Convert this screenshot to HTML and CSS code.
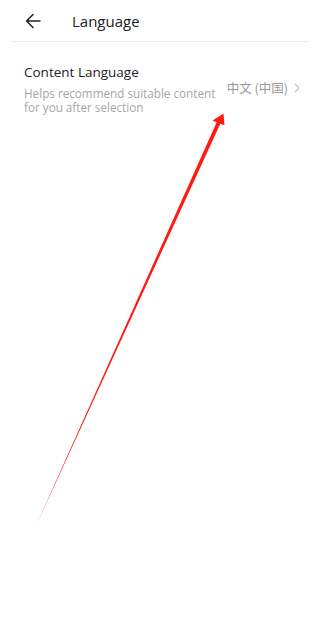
FILE: index.html
```html
<!DOCTYPE html>
<html>
<head>
<meta charset="utf-8">
<link rel="stylesheet" href="styles.css">
</head>
<body>
<div class="page">
  <header class="topbar">
    <svg class="back" width="16" height="16" viewBox="0 0 16 16">
      <path d="M15 8H2M8 1.5L1.6 8 8 14.5" fill="none" stroke="#222" stroke-width="1.6" stroke-linecap="round" stroke-linejoin="round"/>
    </svg>
    <h1 class="title">Language</h1>
  </header>
  <div class="row">
    <div class="row-text">
      <div class="row-title">Content Language</div>
      <div class="row-sub">Helps recommend suitable content for you after selection</div>
    </div>
    <div class="row-value">中文 (中国)</div>
    <svg class="chev" width="6" height="10" viewBox="0 0 6 10">
      <path d="M1 1l4 4-4 4" fill="none" stroke="#c4c4c4" stroke-width="1.1" stroke-linecap="round" stroke-linejoin="round"/>
    </svg>
  </div>
  <svg class="annot" width="309" height="637" viewBox="0 0 309 637">
    <polygon points="35,528 216.7,122.2 212.5,120.5 223.5,113.5 224.5,125.2 220.3,123.8" fill="#ff1a12"/>
  </svg>
</div>
</body>
</html>
```
FILE: styles.css
```css
html, body {
  margin: 0;
  padding: 0;
  background: #fff;
}
body {
  font-family: "Open Sans", "Noto Sans", "Noto Sans CJK SC", sans-serif;
  color: #222;
  width: 309px;
  height: 637px;
  overflow: hidden;
}
.page {
  position: relative;
  width: 309px;
  height: 637px;
}
.topbar {
  display: flex;
  align-items: center;
  height: 42px;
  margin-left: 11px;
  border-bottom: 1px solid #ececec;
  box-sizing: border-box;
}
.back {
  margin-left: 14px;
  margin-top: 1px;
}
.title {
  margin: 1px 0 0 31px;
  font-size: 15px;
  font-weight: 400;
  color: #222;
}
.row {
  display: flex;
  align-items: flex-start;
  padding: 20px 9px 0 24px;
}
.row-text {
  flex: 1;
  min-width: 0;
}
.row-title {
  font-size: 13.5px;
  line-height: 20px;
  color: #222;
}
.row-sub {
  margin-top: 4px;
  font-size: 11.7px;
  line-height: 14px;
  color: #a6a6a6;
  width: 200px;
}
.row-value {
  font-size: 12.5px;
  line-height: 16px;
  color: #999;
  font-family: "Noto Sans CJK SC", "Open Sans", sans-serif;
  margin-top: 18px;
  white-space: nowrap;
}
.chev {
  margin-left: 6px;
  margin-top: 21px;
}
.annot {
  position: absolute;
  left: 0;
  top: 0;
  pointer-events: none;
}
```
